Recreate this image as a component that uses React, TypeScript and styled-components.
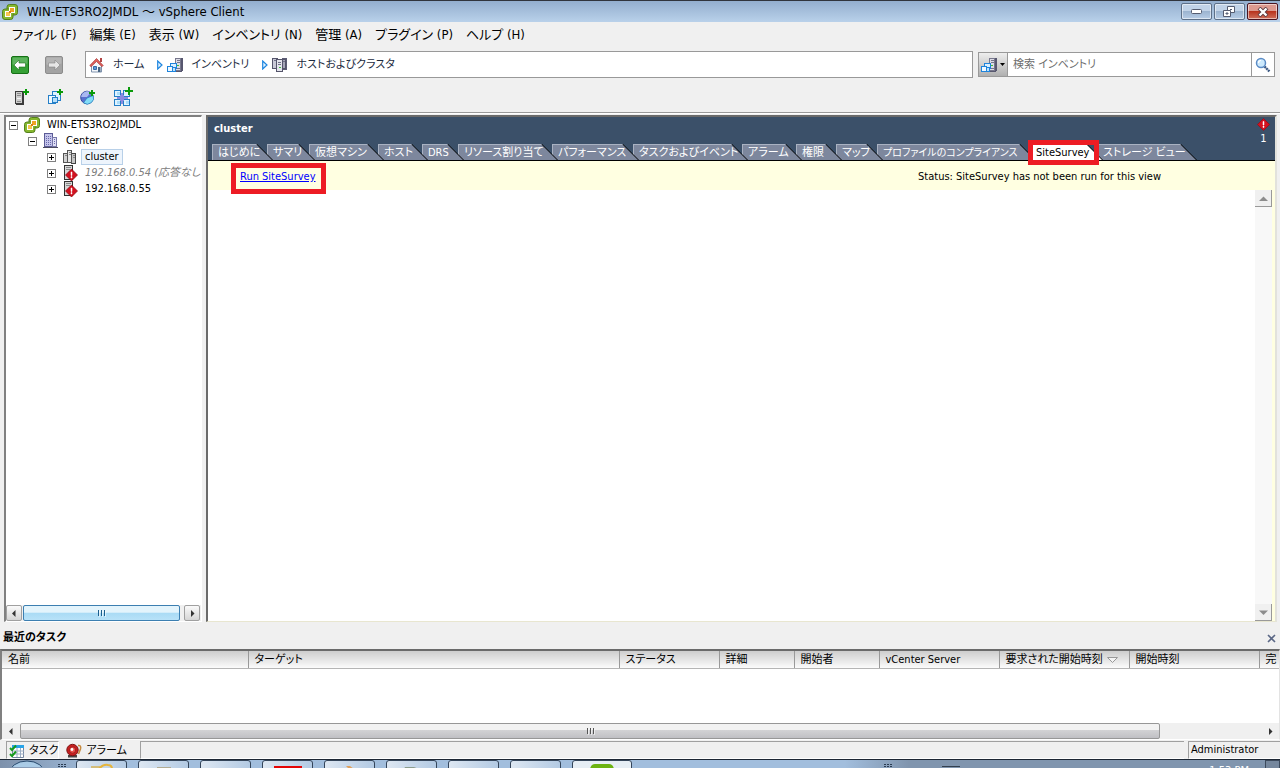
import { ReactNode } from "react";
import styled, { createGlobalStyle } from "styled-components";

const menus = [
  "ファイル (F)",
  "編集 (E)",
  "表示 (W)",
  "インベントリ (N)",
  "管理 (A)",
  "プラグイン (P)",
  "ヘルプ (H)",
];

const tabs = [
  { name: "はじめに", width: 61 },
  { name: "サマリ", width: 48 },
  { name: "仮想マシン", width: 75 },
  { name: "ホスト", width: 50 },
  { name: "DRS", width: 42 },
  { name: "リソース割り当て", width: 100 },
  { name: "パフォーマンス", width: 87 },
  { name: "タスクおよびイベント", width: 115 },
  { name: "アラーム", width: 60 },
  { name: "権限", width: 46 },
  { name: "マップ", width: 47 },
  { name: "プロファイルのコンプライアンス", width: 159, small: true },
  { name: "SiteSurvey", width: 73, active: true },
  { name: "ストレージ ビュー", width: 100 },
];

const columns = [
  { name: "名前", width: 246 },
  { name: "ターゲット", width: 371 },
  { name: "ステータス", width: 100 },
  { name: "詳細", width: 75 },
  { name: "開始者", width: 85 },
  { name: "vCenter Server", width: 120 },
  { name: "要求された開始時刻", width: 130, sorted: true },
  { name: "開始時刻", width: 130 },
  { name: "完", width: 0 },
];

/* ---------- icons ---------- */

const VSphereIcon = () => (
  <svg width="16" height="16" viewBox="0 0 16 16">
    <rect x="5" y=".5" width="10.500" height="10.500" rx="2.500" fill="#86b82e" stroke="#55801c" />
    <rect x=".5" y="5" width="10.500" height="10.500" rx="2.500" fill="#86b82e" stroke="#55801c" />
    <path d="M5.500 5.500h5v5h-5z" fill="#86b82e" />
    <path d="M7 3h6v6h-4v4H3V7h4z" fill="#fff" />
    <path d="M8 4h4v4H8z" fill="#f0a324" />
    <path d="M4 8h4v4H4z" fill="#f6c54e" />
    <path d="M7 7h2v2H7z" fill="#d97f12" />
  </svg>
);

const ServerBody = ({ x = 6 }: { x?: number }) => (
  <g transform={`translate(${x} 0)`}>
    <path d="M1 1h8v12l-2 2H1z" fill="#57576f" />
    <path d="M1.500 1.500h5v12h-5z" fill="#dcdce6" stroke="#77778c" />
    <path d="M3 3.500h3M3 5.500h3M3 11.500h3" stroke="#77778c" />
    <path d="M3 8h2v1H3z" fill="#3cc234" />
  </g>
);

const InventoryIcon = () => (
  <svg width="16" height="16" viewBox="0 0 16 16" shapeRendering="crispEdges">
    <ServerBody x={7} />
    <path d="M3.500 6.500h6v5h-6z" fill="#d9efff" stroke="#1e84dc" />
    <path d="M.5 9.500h5v5h-5z" fill="#eff8ff" stroke="#1e84dc" />
    <path d="M5.500 10.500h3v4h-3z" fill="#bfe2fb" stroke="#1e84dc" />
  </svg>
);

const HostsIcon = () => (
  <svg width="16" height="16" viewBox="0 0 16 16" shapeRendering="crispEdges">
    <path d="M.5 1.500h5v10h-5z" fill="#c9c9d6" stroke="#55556b" />
    <path d="M10 1h5v12h-5z" fill="#5c5c74" />
    <path d="M10.500 2.500h3v9h-3z" fill="#a5a5b7" stroke="#55556b" />
    <path d="M4.500 2.500h6v12h-6z" fill="#e4e4ec" stroke="#55556b" />
    <path d="M6 5.500h3M6 7.500h3M2 3.500h2M11 4.500h2" stroke="#707086" />
    <path d="M7 10h2v1H7z" fill="#3cc234" />
  </svg>
);

const HomeIcon = () => (
  <svg width="16" height="16" viewBox="0 0 16 16">
    <path d="M2.500 8v7h10V8L7.500 3z" fill="#f4f7fb" stroke="#8093ad" />
    <path d="M11 1h2v4h-2z" fill="#b34545" />
    <path d="M.8 8.500L7.500 1.500l6.700 7-1.200 1.200L7.500 4.500 2 9.700z" fill="#e1605c" stroke="#a33b3b" strokeWidth=".7" />
    <path d="M4.500 9.500h3v3h-3z" fill="#5d98da" stroke="#396ba5" />
    <path d="M9 10h2.500v5H9z" fill="#496583" />
  </svg>
);

const NavArrow = ({ back }: { back?: boolean }) => (
  <svg width="18" height="18" viewBox="0 0 18 18">
    <rect x=".5" y=".5" width="17" height="17" rx="1.500" fill={back ? "#35a035" : "#a3a3a3"} stroke={back ? "#167016" : "#8c8c8c"} />
    <path d="M1.500 1.500h15v6q-7 3-15 1z" fill="#fff" opacity=".2" />
    <path
      d={back ? "M3 9l5-5v3h6.500v4H8v3z" : "M15 9l-5-5v3H3.500v4H10v3z"}
      fill={back ? "#fff" : "#e6e6e6"}
      stroke={back ? "#1c701c" : "#858585"}
      strokeWidth=".6"
    />
  </svg>
);

const Plus = ({ x, y }: { x: number; y: number }) => (
  <path d={`M${x} ${y + 2}h2v-2h2v2h2v2h-2v2h-2v-2h-2z`} fill="#0a9a0a" />
);

const NewHostIcon = () => (
  <svg width="16" height="18" viewBox="0 0 16 18" shapeRendering="crispEdges">
    <path d="M2 4h8v13H2z" fill="#3c3c3c" />
    <path d="M1.500 3.500h7v12h-7z" fill="#cdcdcd" stroke="#3c3c3c" />
    <path d="M3 5.500h4M3 7.500h4M3 13.500h4" stroke="#8a8a8a" />
    <path d="M3 10.500h4" stroke="#f5f5f5" />
    <Plus x={9} y={1} />
  </svg>
);

const NewVmIcon = () => (
  <svg width="16" height="18" viewBox="0 0 16 18" shapeRendering="crispEdges">
    <path d="M5.500 3.500h8v9h-8z" fill="#dff2ff" stroke="#247fc8" />
    <path d="M1.500 7.500h7v8h-7z" fill="#eff9ff" stroke="#247fc8" />
    <path d="M5.500 9.500h5v5h-5z" fill="#b7dffa" stroke="#247fc8" />
    <Plus x={10} y={1} />
  </svg>
);

const NewStoreIcon = () => (
  <svg width="16" height="18" viewBox="0 0 16 18">
    <circle cx="7" cy="9.500" r="6.300" fill="#5a71cf" stroke="#36489c" />
    <path d="M1.200 9a6 6 0 0 1 9.500-4.500L7 9z" fill="#a9b8f1" />
    <path d="M7 10l6.200-2.500A6.300 6.300 0 0 1 3.500 14.800z" fill="#83dcf7" stroke="#2277b9" strokeWidth=".7" />
    <Plus x={9} y={2} />
  </svg>
);

const NewAppIcon = () => (
  <svg width="20" height="20" viewBox="0 0 20 20" shapeRendering="crispEdges">
    <path d="M4 6h11v11H4z" fill="#8a8ae0" />
    <path d="M1.500 3.500h6v6h-6zM1.500 12.500h6v6h-6zM10.500 12.500h6v6h-6zM10.500 3.500h6v6h-6z" fill="#dff3ff" stroke="#257fc6" />
    <path d="M4 14h3v3H4zM13 14h3v3h-3zM4 5h3v3H4z" fill="#a9dcfa" />
    <path d="M7 8h4v6H7z" fill="#8a8ae0" />
    <path d="M12 1h8v5h-8z" fill="#f0f0f0" />
    <path d="M12 3h3V0h2v3h3v2h-3v3h-2V5h-3z" fill="#0a9a0a" />
  </svg>
);

const SearchIcon = () => (
  <svg width="16" height="16" viewBox="0 0 16 16">
    <path d="M9.500 9.500l5 5" stroke="#3d5a84" strokeWidth="2.400" strokeDasharray="2 .5" />
    <circle cx="6" cy="6" r="4.500" fill="#cdeafd" stroke="#5c8cc6" strokeWidth="1.500" />
    <path d="M3.500 6q0-2.500 2.500-2.500" stroke="#fff" strokeWidth="1.200" fill="none" />
  </svg>
);

const DatacenterIcon = () => (
  <svg width="16" height="16" viewBox="0 0 16 16" shapeRendering="crispEdges">
    <path d="M1.500 .5h8v13h-8z" fill="#c4c4ea" stroke="#5b5b96" />
    <path d="M9.500 4.500h4v9h-4z" fill="#dedef4" stroke="#7676a8" />
    <path d="M3 3.500h6M3 5.500h6M3 7.500h6M3 9.500h6M3 11.500h6" stroke="#6868ad" strokeDasharray="1 1" />
    <path d="M11 6.500h2M11 8.500h2M11 10.500h2" stroke="#6868ad" strokeDasharray="1 1" />
    <path d="M0 14h15v1H0z" fill="#4a4a60" />
  </svg>
);

const ClusterIcon = () => (
  <svg width="16" height="16" viewBox="0 0 16 16" shapeRendering="crispEdges">
    <path d="M1.500 4.500h4v9h-4z" fill="#d2d2d2" stroke="#555" />
    <path d="M9.500 4.500h4v10h-4z" fill="#c6c6c6" stroke="#444" />
    <path d="M5.500 1.500h4v12h-4z" fill="#e6e6e6" stroke="#555" />
    <path d="M7 3.500h2M7 5.500h2M3 6.500h2M11 6.500h2M11 8.500h2" stroke="#888" />
  </svg>
);

const AlertMark = () => (
  <svg width="13" height="13" viewBox="0 0 13 13">
    <path d="M6.500 .5l6 6-6 6-6-6z" fill="#d3111f" stroke="#9b0914" strokeWidth=".7" />
    <path d="M6 3.500h1v3.500H6zM6 8h1v1.500H6z" fill="#fff" stroke="#fff" strokeWidth=".5" />
  </svg>
);

const HostAlertIcon = () => (
  <svg width="16" height="16" viewBox="0 0 16 16">
    <path d="M2.500 .5h8v14h-8z" fill="#d7d7d7" stroke="#333" shapeRendering="crispEdges" />
    <path d="M4 2.500h5M4 4.500h4" stroke="#888" />
    <path d="M9.500 4l6 6-6 6-6-6z" fill="#d3111f" stroke="#8b0610" strokeWidth=".7" />
    <path d="M9 7h1v3.500H9zM9 11.500h1v1.500H9z" fill="#fff" stroke="#fff" strokeWidth=".5" />
  </svg>
);

const TaskIcon = () => (
  <svg width="16" height="16" viewBox="0 0 16 16">
    <path d="M3.500 2.500h11v12h-11z" fill="#fff" stroke="#7486a0" />
    <path d="M3 2h12v3H3z" fill="#29a3e8" />
    <path d="M4 8h11M4 11h11M8 5v9M11.500 5v9" stroke="#9badc4" />
    <path d="M1 5l2 2 4-4.500M1 11l2 2 4-4.500" fill="none" stroke="#169b1c" strokeWidth="2" />
  </svg>
);

const AlarmIcon = () => (
  <svg width="16" height="16" viewBox="0 0 16 16">
    <path d="M2 12h9v2.500H2z" fill="#4b4444" />
    <circle cx="6.500" cy="7" r="5.700" fill="#c71f1f" stroke="#7c1212" />
    <circle cx="6.500" cy="7" r="3.200" fill="#e6514b" stroke="#8f1515" strokeWidth=".7" />
    <circle cx="6" cy="6.500" r="1.400" fill="#fff" />
    <path d="M12 2.500q3.500-.5 2.500 3.500l-2 5" fill="none" stroke="#c68a3d" strokeWidth="1.500" />
  </svg>
);

const Triangle = ({ dir, color = "#333" }: { dir: "left" | "right" | "up" | "down"; color?: string }) => {
  const shapes = {
    left: "M5.500 1v7L2 4.500z",
    right: "M3 1v7l3.500-3.500z",
    up: "M0 7h9L4.500 2.500z",
    down: "M0 2.500h9L4.500 7z",
  };
  return (
    <svg width="9" height="9" viewBox="0 0 9 9">
      <path d={shapes[dir]} fill={color} />
    </svg>
  );
};

const CrumbArrow = () => (
  <svg width="6" height="10" viewBox="0 0 6 10">
    <path d="M.7 1v8L5 5z" fill="#dff1ff" stroke="#1f86e0" strokeWidth="1.200" />
  </svg>
);

const Grip = ({ color }: { color: string }) => (
  <svg width="9" height="7" viewBox="0 0 9 7" shapeRendering="crispEdges">
    <path d="M1.500 0v6M4.500 0v6M7.500 0v6" stroke={color} />
    <path d="M2.500 1v6M5.500 1v6M8.500 1v6" stroke="#fff" opacity=".6" />
  </svg>
);

/* ---------- tree ---------- */

type NodeProps = {
  level: number;
  icon: ReactNode;
  label: string;
  open?: boolean;
  selected?: boolean;
  dim?: boolean;
};

const TreeNode = ({ level, icon, label, open, selected, dim }: NodeProps) => (
  <TreeRow $level={level}>
    <Expander aria-label={open ? "Collapse" : "Expand"}>
      <svg width="9" height="9" viewBox="0 0 9 9" shapeRendering="crispEdges">
        <path d="M.5 .5h8v8h-8z" fill="#fff" stroke="#808080" />
        <path d={open ? "M2 4.500h5" : "M2 4.500h5M4.500 2v5"} stroke="#000" />
      </svg>
    </Expander>
    {icon}
    <TreeLabel $selected={selected} $dim={dim}>
      {label}
    </TreeLabel>
  </TreeRow>
);

export default function App() {
  return (
    <Window>
      <GlobalStyle />
      <TitleBar>
        <VSphereIcon />
        <Title>WIN-ETS3RO2JMDL ～ vSphere Client</Title>
        <WindowButton aria-label="Minimize">
          <svg width="12" height="6" viewBox="0 0 12 6">
            <rect x=".5" y=".5" width="10" height="4" rx="1" fill="#fff" stroke="#555c70" />
          </svg>
        </WindowButton>
        <WindowButton aria-label="Restore">
          <svg width="13" height="12" viewBox="0 0 13 12">
            <path d="M4.500 .5h7v6h-7z" fill="#fff" stroke="#555c70" />
            <path d="M7 3h2v1H7z" fill="#555c70" />
            <path d="M.5 4.500h7v6h-7z" fill="#fff" stroke="#555c70" />
            <path d="M3 7h2v1H3z" fill="#8fa8c8" stroke="#555c70" />
          </svg>
        </WindowButton>
        <WindowButton aria-label="Close" $close>
          <svg width="12" height="10" viewBox="0 0 12 10">
            <path d="M2 1l8 8M10 1L2 9" stroke="#5b3a40" strokeWidth="4" />
            <path d="M2.500 1.500l7 7M9.500 1.500l-7 7" stroke="#fff" strokeWidth="2.400" />
          </svg>
        </WindowButton>
      </TitleBar>

      <MenuBar>
        {menus.map((menu) => (
          <MenuButton key={menu}>{menu}</MenuButton>
        ))}
      </MenuBar>

      <NavRow>
        <IconButton aria-label="Back">
          <NavArrow back />
        </IconButton>
        <IconButton aria-label="Forward">
          <NavArrow />
        </IconButton>
        <Breadcrumb>
          <Crumb href="#home">
            <HomeIcon />
            ホーム
          </Crumb>
          <CrumbArrow />
          <Crumb href="#inventory">
            <InventoryIcon />
            インベントリ
          </Crumb>
          <CrumbArrow />
          <Crumb href="#hosts">
            <HostsIcon />
            ホストおよびクラスタ
          </Crumb>
        </Breadcrumb>
        <SearchBox>
          <ScopeButton aria-label="Search scope">
            <InventoryIcon />
            <svg width="5" height="3" viewBox="0 0 5 3">
              <path d="M0 0h5L2.500 3z" />
            </svg>
          </ScopeButton>
          <SearchInput aria-label="検索" placeholder="検索 インベントリ" />
          <SearchButton aria-label="Search">
            <SearchIcon />
          </SearchButton>
        </SearchBox>
      </NavRow>

      <ToolBar>
        <IconButton aria-label="New host">
          <NewHostIcon />
        </IconButton>
        <IconButton aria-label="New virtual machine">
          <NewVmIcon />
        </IconButton>
        <IconButton aria-label="New resource pool">
          <NewStoreIcon />
        </IconButton>
        <IconButton aria-label="New vApp">
          <NewAppIcon />
        </IconButton>
      </ToolBar>

      <Main>
        <TreePanel>
          <TreeList>
            <TreeNode level={0} icon={<VSphereIcon />} label="WIN-ETS3RO2JMDL" open />
            <TreeNode level={1} icon={<DatacenterIcon />} label="Center" open />
            <TreeNode level={2} icon={<ClusterIcon />} label="cluster" selected />
            <TreeNode level={2} icon={<HostAlertIcon />} label="192.168.0.54 (応答なし" dim />
            <TreeNode level={2} icon={<HostAlertIcon />} label="192.168.0.55" />
          </TreeList>
          <TreeScroll>
            <SmallScrollButton aria-label="Scroll left">
              <Triangle dir="left" />
            </SmallScrollButton>
            <BlueThumb>
              <Grip color="#1c5f8e" />
            </BlueThumb>
            <SmallScrollButton aria-label="Scroll right">
              <Triangle dir="right" />
            </SmallScrollButton>
          </TreeScroll>
        </TreePanel>

        <Content>
          <ContentHeader>
            <HeaderTop>
              <ObjectName>cluster</ObjectName>
              <AlertCount>
                <AlertMark />1
              </AlertCount>
            </HeaderTop>
            <TabStrip>
              {tabs.map((tab, i) => (
                <TabItem key={tab.name} $width={tab.width} $order={tabs.length - i} $active={tab.active}>
                  <TabButton $active={tab.active} $small={tab.small}>
                    <span>{tab.name}</span>
                  </TabButton>
                  {tab.active && <TabMark />}
                </TabItem>
              ))}
            </TabStrip>
          </ContentHeader>
          <SurveyBar>
            <RunFrame>
              <RunLink href="#run">Run SiteSurvey</RunLink>
            </RunFrame>
            <span>Status: SiteSurvey has not been run for this view</span>
          </SurveyBar>
          <SurveyBody>
            <VerticalScroll>
              <ClassicButton aria-label="Scroll up">
                <Triangle dir="up" color="#8c8c8c" />
              </ClassicButton>
              <ClassicButton aria-label="Scroll down">
                <Triangle dir="down" color="#8c8c8c" />
              </ClassicButton>
            </VerticalScroll>
          </SurveyBody>
        </Content>
      </Main>

      <TaskHeader>
        <TaskTitle>最近のタスク</TaskTitle>
        <IconButton aria-label="Close tasks">
          <svg width="9" height="9" viewBox="0 0 9 9">
            <path d="M1 1l7 7M8 1L1 8" stroke="#5a6785" strokeWidth="1.600" />
          </svg>
        </IconButton>
      </TaskHeader>
      <TaskPanel>
        <TaskArea>
          <TaskTable>
            <colgroup>
              {columns.map((col) => (
                <col key={col.name} style={{ width: col.width || "auto" }} />
              ))}
            </colgroup>
            <thead>
              <tr>
                {columns.map((col) => (
                  <HeadCell key={col.name}>
                    {col.name}
                    {col.sorted && (
                      <SortMark width="11" height="6" viewBox="0 0 11 6">
                        <path d="M.5 .5h10L5.500 5.500z" fill="#f4f4f4" stroke="#999" />
                      </SortMark>
                    )}
                  </HeadCell>
                ))}
              </tr>
            </thead>
          </TaskTable>
        </TaskArea>
        <TaskScroll>
          <FlatScrollButton aria-label="Scroll left">
            <Triangle dir="left" />
          </FlatScrollButton>
          <GrayThumb>
            <Grip color="#555" />
          </GrayThumb>
          <ScrollTrack />
          <FlatScrollButton aria-label="Scroll right">
            <Triangle dir="right" />
          </FlatScrollButton>
        </TaskScroll>
      </TaskPanel>

      <StatusBar>
        <StatusTab $active>
          <TaskIcon />
          タスク
        </StatusTab>
        <StatusTab>
          <AlarmIcon />
          アラーム
        </StatusTab>
        <StatusField $grow />
        <StatusField>Administrator</StatusField>
      </StatusBar>

      <DesktopBar>
        <StartArea>
          <svg width="76" height="7" viewBox="0 0 76 7">
            <ellipse cx="27" cy="14" rx="18" ry="13" fill="#a9cbe6" stroke="#26486c" />
            <path d="M58 4.500h9M58 6.500h9" stroke="#2b3c52" strokeDasharray="2 1" />
          </svg>
        </StartArea>
        <AppStack>
          <AppButton $width={51}>
            <svg width="22" height="6" viewBox="0 0 22 6">
              <path d="M0 3h9v3H0z" fill="#d3bd7c" />
              <path d="M8 6q4-5 9-4 4 0 4 4" fill="none" stroke="#e5b53d" strokeWidth="2" />
            </svg>
          </AppButton>
          <AppButton $width={51}>
            <svg width="14" height="6" viewBox="0 0 14 6">
              <path d="M0 4h14v2H0z" fill="#b1ab92" />
            </svg>
          </AppButton>
          <AppButton $width={51} />
          <AppButton $width={51}>
            <svg width="28" height="6" viewBox="0 0 28 6">
              <path d="M0 3h28v3H0z" fill="#e40505" />
            </svg>
          </AppButton>
          <AppButton $width={51}>
            <svg width="12" height="6" viewBox="0 0 12 6">
              <path d="M2 3h4l4 3H5z" fill="#e0a15c" />
            </svg>
          </AppButton>
          <AppButton $width={51}>
            <svg width="16" height="6" viewBox="0 0 16 6">
              <path d="M1 4h9l5 2H0z" fill="#8b9c8c" />
            </svg>
          </AppButton>
          <AppButton $width={51} />
          <AppButton $width={51}>
            <svg width="30" height="6" viewBox="0 0 30 6">
              <path d="M0 5h30v1H0z" fill="#5b6673" />
            </svg>
          </AppButton>
          <AppButton $width={60} $active>
            <svg width="24" height="6" viewBox="0 0 24 6">
              <path d="M0 6q1-5 5-5h14q4 0 5 5z" fill="#6cb312" />
            </svg>
          </AppButton>
        </AppStack>
        <TrayArea>
          <svg width="90" height="7" viewBox="0 0 90 7">
            <path d="M0 4.500h9M0 6.500h9" stroke="#2b3c52" strokeDasharray="2 1" />
            <path d="M58 6h18v1H58z" fill="#33404f" />
          </svg>
          <Clock>1:53 PM</Clock>
          <ShowDesktop aria-label="Show desktop" />
        </TrayArea>
      </DesktopBar>
    </Window>
  );
}

const GlobalStyle = createGlobalStyle`
  * {
    box-sizing: border-box;
  }
  body {
    margin: 0;
    background: #f0f0f0;
  }
  body, button, input, table {
    font-family: "DejaVu Sans Condensed", "Noto Sans", "Noto Sans CJK JP", sans-serif;
    font-size: 11px;
    line-height: 16px;
    font-feature-settings: "palt";
    color: #000;
  }
  button {
    border: 0;
    padding: 0;
    background: none;
  }
  svg {
    display: block;
    flex: none;
  }
`;

const Window = styled.div`
  height: 100vh;
  display: flex;
  flex-direction: column;
  overflow: hidden;
  background: #f0f0f0;
  white-space: nowrap;
`;

const TitleBar = styled.header`
  display: flex;
  align-items: center;
  gap: 2px;
  height: 22px;
  padding: 0 2px;
  border-top: 1px solid #30343c;
  background: linear-gradient(#93aece, #b9d1ea);
`;
const Title = styled.h1`
  flex: 1;
  margin: 0;
  padding-left: 7px;
  font-size: 13px;
  font-weight: normal;
`;
const WindowButton = styled.button<{ $close?: boolean }>`
  width: 31px;
  height: 17px;
  display: flex;
  align-items: center;
  justify-content: center;
  border: 1px solid ${({ $close }) => ($close ? "#4a1420" : "#5d7088")};
  border-radius: 2px;
  box-shadow: inset 0 0 0 1px #ffffff88;
  background: ${({ $close }) =>
    $close
      ? "linear-gradient(#dc9a90 0 45%, #b8341f 50%, #d0705c)"
      : "linear-gradient(#c1d3e8 0 45%, #9cb4d0 50%, #b7cde6)"};
`;

const MenuBar = styled.nav`
  display: flex;
  gap: 13px;
  height: 26px;
  padding: 0 12px;
`;
const MenuButton = styled.button`
  font-size: 13px;
`;

const NavRow = styled.div`
  display: flex;
  align-items: center;
  height: 33px;
  padding: 0 5px 0 11px;

  & > button {
    width: 18px;
    margin-right: 16px;
  }
`;
const IconButton = styled.button`
  display: flex;
  align-items: center;
  justify-content: center;
`;
const Breadcrumb = styled.nav`
  flex: 1;
  display: flex;
  align-items: center;
  gap: 13px;
  height: 27px;
  margin: 0 5px 0 6px;
  padding: 0 3px;
  border: 1px solid #999;
  background: #fff;
`;
const Crumb = styled.a`
  display: flex;
  align-items: center;
  gap: 8px;
  color: #1c2b40;
  text-decoration: none;

  svg + & {
    margin-left: -9px;
  }
`;
const SearchBox = styled.div`
  display: flex;
  width: 297px;
  height: 25px;
  border: 1px solid #999;
  background: #fff;
`;
const ScopeButton = styled.button`
  width: 29px;
  display: flex;
  align-items: center;
  justify-content: center;
  gap: 3px;
  border-right: 1px solid #999;
  background: linear-gradient(#eee, #b0b0b0);
`;
const SearchInput = styled.input`
  flex: 1;
  min-width: 0;
  padding: 0 5px;
  border: 0;
  outline: 0;

  &::placeholder {
    color: #6d6d6d;
  }
`;
const SearchButton = styled.button`
  width: 23px;
  display: flex;
  align-items: center;
  justify-content: center;
  border-left: 1px solid #999;
`;

const ToolBar = styled.div`
  display: flex;
  align-items: center;
  gap: 17px;
  height: 32px;
  padding: 0 14px;
  border-bottom: 1px solid #999;
`;

const Main = styled.main`
  flex: 1;
  min-height: 0;
  display: flex;
  gap: 4px;
  padding: 1px 3px 0 4px;
  border-top: 1px solid #fff;
`;
const TreePanel = styled.aside`
  flex: 0 0 198px;
  display: flex;
  flex-direction: column;
  overflow: hidden;
  border: solid;
  border-width: 2px 1px 1px 2px;
  border-color: #808080 #fff #fff #808080;
  background: #fff;
`;
const TreeList = styled.ul`
  flex: 1;
  margin: 0;
  padding: 0;
  list-style: none;
  overflow: hidden;
`;
const TreeRow = styled.li<{ $level: number }>`
  display: flex;
  align-items: center;
  height: 16px;
  padding-left: ${({ $level }) => 3 + $level * 19}px;
`;
const Expander = styled.button`
  margin-right: 6px;
`;
const TreeLabel = styled.span<{ $selected?: boolean; $dim?: boolean }>`
  margin-left: 3px;
  padding: 0 3px;
  line-height: 14px;
  border: 1px solid ${({ $selected }) => ($selected ? "#b8d0e8" : "transparent")};
  background: ${({ $selected }) => ($selected ? "#edf4fc" : "none")};
  color: ${({ $dim }) => ($dim ? "#808080" : "#000")};
  font-style: ${({ $dim }) => ($dim ? "italic" : "normal")};
`;
const TreeScroll = styled.div`
  display: flex;
  height: 16px;
  gap: 1px;
  padding-right: 1px;
  background: #f0f0f0;
`;
const SmallScrollButton = styled.button`
  width: 16px;
  display: flex;
  align-items: center;
  justify-content: center;
  border: 1px solid #a0a0a0;
  border-radius: 2px;
  background: linear-gradient(#fafafa, #d5d5d5);
`;
const BlueThumb = styled.div`
  flex: 1;
  display: flex;
  align-items: center;
  justify-content: center;
  margin-right: 3px;
  border: 1px solid #3c7fb1;
  border-radius: 2px;
  background: linear-gradient(#e3f4fc 0 45%, #a9dbf5 50%, #b8e2f8);
`;

const Content = styled.section`
  flex: 1;
  min-width: 0;
  display: flex;
  flex-direction: column;
  border: solid;
  border-width: 2px 2px 1px 2px;
  border-color: #6a6a6a #e2e2dc #e8e6d0 #6a6a6a;
  background: #fff;
`;
const ContentHeader = styled.div`
  border-bottom: 1px solid #000;
  background: #3b5069;
  color: #fff;
`;
const HeaderTop = styled.div`
  display: flex;
  justify-content: space-between;
  height: 27px;
  padding: 0 5px 0 6px;
`;
const ObjectName = styled.h2`
  margin: 0;
  padding-top: 4px;
  font-size: 11px;
`;
const AlertCount = styled.div`
  display: flex;
  flex-direction: column;
  align-items: center;
  padding-top: 1px;
`;
const TabStrip = styled.div`
  display: flex;
  padding-left: 4px;
`;
const TabItem = styled.div<{ $width: number; $order: number; $active?: boolean }>`
  position: relative;
  flex: 0 0 ${({ $width }) => $width}px;
  height: 16px;
  margin-right: -6px;
  z-index: ${({ $order, $active }) => ($active ? 20 : $order)};
`;
const TabButton = styled.button<{ $active?: boolean; $small?: boolean }>`
  display: block;
  width: 100%;
  height: 16px;
  background: #000;
  clip-path: polygon(0 0, calc(100% - 16px) 0, 100% 100%, 0 100%);
  font-size: ${({ $small }) => ($small ? "10px" : "11px")};
  text-align: left;

  & > span {
    display: block;
    height: 16px;
    padding-left: 5px;
    border: solid ${({ $active }) => ($active ? "#fff" : "#a9b2c2")};
    border-width: 1px 0 0 1px;
    background: ${({ $active }) => ($active ? "#fff" : "#7d879d")};
    color: ${({ $active }) => ($active ? "#000" : "#fff")};
    clip-path: polygon(0 0, calc(100% - 17px) 0, calc(100% - 1px) 100%, 0 100%);
    line-height: 15px;
  }
`;
const TabMark = styled.div`
  position: absolute;
  inset: -4px 4px -5px -2px;
  border: 5px solid #ed1c24;
  pointer-events: none;
`;
const SurveyBar = styled.div`
  display: flex;
  align-items: center;
  justify-content: space-between;
  height: 29px;
  padding: 2px 114px 0 23px;
  background: #ffffe1;
`;
const RunFrame = styled.div`
  position: relative;
  margin: 0 0 -4px;
  padding: 1px 5px 4px 4px;
  border: 5px solid #ed1c24;
`;
const RunLink = styled.a`
  color: #0000ff;
`;
const SurveyBody = styled.div`
  flex: 1;
  display: flex;
  justify-content: flex-end;
  border-right: 3px solid #ffffe1;
`;
const VerticalScroll = styled.div`
  width: 17px;
  display: flex;
  flex-direction: column;
  justify-content: space-between;
  background: #f8f8f8;
`;
const ClassicButton = styled.button`
  height: 17px;
  display: flex;
  align-items: center;
  justify-content: center;
  border: solid;
  border-width: 0 1px 1px 0;
  border-color: #999;
  background: #f0f0f0;
`;

const TaskHeader = styled.div`
  display: flex;
  align-items: center;
  justify-content: space-between;
  height: 27px;
  padding: 5px 4px 0 3px;
`;
const TaskTitle = styled.h2`
  margin: 0;
  font-size: 11px;
`;
const TaskPanel = styled.section`
  height: 91px;
  display: flex;
  flex-direction: column;
  border: solid;
  border-width: 2px 1px 1px 2px;
  border-color: #6a6a6a #e3e3e3 #fff #808080;
  background: #fff;
`;
const TaskArea = styled.div`
  flex: 1;
  overflow: hidden;
`;
const TaskTable = styled.table`
  width: 100%;
  table-layout: fixed;
  border-collapse: collapse;
`;
const HeadCell = styled.th`
  height: 17px;
  padding: 1px 0 0 6px;
  border-right: 1px solid #999;
  border-bottom: 1px solid #b5b5b5;
  background: linear-gradient(#cdcdcd, #fbfbfb);
  font-weight: normal;
  line-height: 15px;
  text-align: left;
  overflow: hidden;

  &:last-child {
    border-right: 0;
  }
`;
const SortMark = styled.svg`
  display: inline-block;
  margin-left: 4px;
`;
const TaskScroll = styled.div`
  display: flex;
  height: 16px;
  background: #f0f0f0;
`;
const FlatScrollButton = styled.button`
  width: 18px;
  display: flex;
  align-items: center;
  justify-content: center;
`;
const GrayThumb = styled.div`
  flex: 1;
  display: flex;
  align-items: center;
  justify-content: center;
  border: 1px solid #979797;
  border-radius: 2px;
  background: linear-gradient(#f2f2f2 0 40%, #d2d2d4 45%, #c0c0c4);
`;
const ScrollTrack = styled.div`
  flex: 0 0 101px;
`;

const StatusBar = styled.footer`
  display: flex;
  gap: 4px;
  height: 19px;
  padding: 1px 0 0 6px;
`;
const StatusTab = styled.button<{ $active?: boolean }>`
  display: flex;
  align-items: center;
  gap: 4px;
  padding: 1px 0 0 2px;
  border: solid;
  border-width: 1px;
  border-color: ${({ $active }) => ($active ? "#a0a0a0 #fff #fff #a0a0a0" : "transparent")};
`;
const StatusField = styled.div<{ $grow?: boolean }>`
  flex: ${({ $grow }) => ($grow ? "1" : "0 0 92px")};
  margin-left: ${({ $grow }) => ($grow ? "8px" : "0")};
  padding-left: 2px;
  border: solid;
  border-width: 1px 0 1px 1px;
  border-color: #a0a0a0 #fff #fff #a0a0a0;
`;

const DesktopBar = styled.div`
  display: flex;
  height: 9px;
  overflow: hidden;
  border-top: 1px solid #1c2633;
  background: linear-gradient(90deg, #7d91ab 0, #a2bedd 8%, #a2bedd 66%, #8095ae 71%);
`;
const StartArea = styled.div`
  flex: 0 0 76px;
`;
const AppStack = styled.div`
  flex: 1;
  display: flex;
  gap: 11px;
`;
const AppButton = styled.button<{ $width: number; $active?: boolean }>`
  flex: 0 0 ${({ $width }) => $width}px;
  display: flex;
  justify-content: center;
  align-items: flex-start;
  height: 20px;
  padding-top: 2px;
  border: 1px solid #34455a;
  border-radius: 3px;
  background: ${({ $active }) => ($active ? "#e6eef5" : "linear-gradient(90deg, #dde7f2, #b3cae3)")};
`;
const TrayArea = styled.div`
  flex: 0 0 396px;
  display: flex;
  justify-content: space-between;
`;
const Clock = styled.time`
  margin-left: auto;
  margin-right: 16px;
  padding-top: 3px;
  color: #fff;
`;
const ShowDesktop = styled.button`
  width: 15px;
  height: 20px;
  border: 1px solid #3c4a5c;
  background: #75879d;
`;
